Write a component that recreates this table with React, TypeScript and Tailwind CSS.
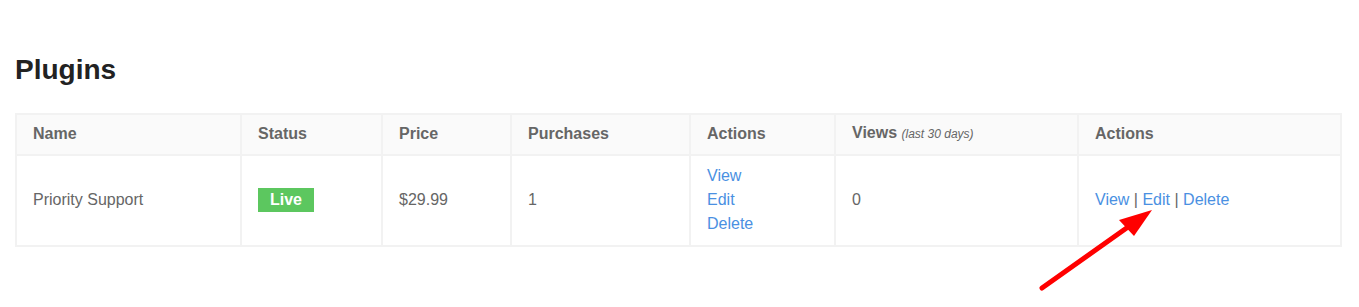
import React from "react";

const font = { fontFamily: '"Liberation Sans", Arial, sans-serif' };

export default function App() {
  const th = "border-2 border-[#f2f2f2] bg-[#fafafa] px-4 pt-[6px] pb-2 text-left font-bold text-[16px] leading-6 text-[#666]";
  const td = "border-2 border-[#f2f2f2] px-4 pt-2 pb-[9px] align-middle text-[16px] leading-6 text-[#666]";
  const link = "text-[#4a90e2]";
  return (
    <div className="relative w-[1359px] h-[307px] bg-white overflow-hidden" style={font}>
      <div className="pl-[15px] pt-[53px]">
        <h1 className="text-[28px] leading-[34px] font-bold text-[#222] mb-[26px]">Plugins</h1>
        <table className="table-fixed border-collapse w-[1325px]">
          <colgroup>
            <col className="w-[225px]" />
            <col className="w-[141px]" />
            <col className="w-[129px]" />
            <col className="w-[179px]" />
            <col className="w-[145px]" />
            <col className="w-[243px]" />
            <col className="w-[263px]" />
          </colgroup>
          <thead>
            <tr>
              <th className={th}>Name</th>
              <th className={th}>Status</th>
              <th className={th}>Price</th>
              <th className={th}>Purchases</th>
              <th className={th}>Actions</th>
              <th className={th}>
                Views <span className="italic font-normal text-[12px]">(last 30 days)</span>
              </th>
              <th className={th}>Actions</th>
            </tr>
          </thead>
          <tbody>
            <tr>
              <td className={td}>Priority Support</td>
              <td className={td}>
                <span className="inline-block bg-[#5cc75f] text-white font-bold px-3 leading-6">Live</span>
              </td>
              <td className={td}>$29.99</td>
              <td className={td}>1</td>
              <td className={td}>
                <div className={link}>View</div>
                <div className={link}>Edit</div>
                <div className={link}>Delete</div>
              </td>
              <td className={td}>0</td>
              <td className={td}>
                <span className={link}>View</span> | <span className={link}>Edit</span> |{" "}
                <span className={link}>Delete</span>
              </td>
            </tr>
          </tbody>
        </table>
      </div>
      <svg className="absolute left-0 top-0 pointer-events-none" width="1359" height="307">
        <line x1="1042" y1="288" x2="1128" y2="227" stroke="#ff0000" strokeWidth="5" strokeLinecap="round" />
        <polygon points="1152,210 1119,220 1134,236" fill="#ff0000" />
      </svg>
    </div>
  );
}
